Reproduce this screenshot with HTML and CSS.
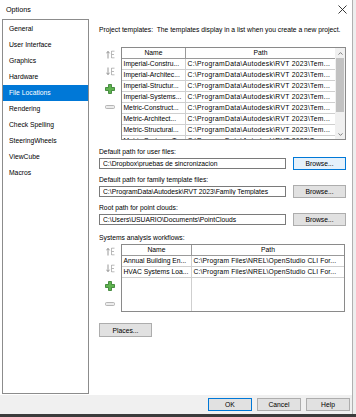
FILE: index.html
```html
<!DOCTYPE html>
<html lang="en">
<head>
    <meta charset="UTF-8">
    <meta name="viewport" content="width=device-width, initial-scale=1.0">
    <title>Options</title>
    <link rel="stylesheet" href="styles.css">
</head>
<body>
    <div class="window">
        <!-- Title bar -->
        <div class="titlebar">
            <span class="title">Options</span>
            <svg class="close" width="9" height="9" viewBox="0 0 9 9"><path d="M0.5 0.5L8.5 8.5M8.5 0.5L0.5 8.5" stroke="#222" stroke-width="0.9"/></svg>
        </div>

        <div class="main">
            <!-- Category list -->
            <ul class="nav">
                <li>General</li>
                <li>User Interface</li>
                <li>Graphics</li>
                <li>Hardware</li>
                <li class="active">File Locations</li>
                <li>Rendering</li>
                <li>Check Spelling</li>
                <li>SteeringWheels</li>
                <li>ViewCube</li>
                <li>Macros</li>
            </ul>

            <div class="panel">
                <p class="label first">Project templates:&nbsp; The templates display in a list when you create a new project.</p>

                <!-- Project templates -->
                <div class="list-block">
                    <div class="tools">
                        <span class="tool"><svg width="9" height="9" viewBox="0 0 9 9"><path d="M2 8.5V1.5M0.4 3.3L2 1.4L3.6 3.3" stroke="#8c8c8c" stroke-width="0.9" fill="none"/><path d="M5.5 1V8M5.5 1.2H8.5M5.5 4.5H8M5.5 7.8H8.5" stroke="#a8a8a8" stroke-width="0.8" fill="none"/></svg></span>
                        <span class="tool"><svg width="9" height="9" viewBox="0 0 9 9"><path d="M2 0.5V7.5M0.4 5.7L2 7.6L3.6 5.7" stroke="#8c8c8c" stroke-width="0.9" fill="none"/><path d="M5.5 1V8M5.5 1.2H8.5M5.5 4.5H8M5.5 7.8H8.5" stroke="#a8a8a8" stroke-width="0.8" fill="none"/></svg></span>
                        <span class="tool"><svg width="10" height="10" viewBox="0 0 10 10"><path d="M3.5 0.5H6.5V3.5H9.5V6.5H6.5V9.5H3.5V6.5H0.5V3.5H3.5Z" fill="#5fb34f" stroke="#2f7a2a" stroke-width="0.8"/></svg></span>
                        <span class="tool"><svg width="10" height="4" viewBox="0 0 10 4"><rect x="0.5" y="0.5" width="9" height="3" rx="1" fill="#ececec" stroke="#a6a6a6" stroke-width="0.8"/></svg></span>
                    </div>
                    <div class="grid templates">
                        <table>
                            <colgroup><col class="col-name"><col></colgroup>
                            <thead>
                                <tr><th>Name</th><th>Path</th></tr>
                            </thead>
                            <tbody>
                                <tr><td>Imperial-Constru...</td><td class="path">C:\ProgramData\Autodesk\RVT 2023\Tem...</td></tr>
                                <tr><td>Imperial-Architec...</td><td class="path">C:\ProgramData\Autodesk\RVT 2023\Tem...</td></tr>
                                <tr><td>Imperial-Structur...</td><td class="path">C:\ProgramData\Autodesk\RVT 2023\Tem...</td></tr>
                                <tr><td>Imperial-Systems...</td><td class="path">C:\ProgramData\Autodesk\RVT 2023\Tem...</td></tr>
                                <tr><td>Metric-Construct...</td><td class="path">C:\ProgramData\Autodesk\RVT 2023\Tem...</td></tr>
                                <tr><td>Metric-Architect...</td><td class="path">C:\ProgramData\Autodesk\RVT 2023\Tem...</td></tr>
                                <tr><td>Metric-Structural...</td><td class="path">C:\ProgramData\Autodesk\RVT 2023\Tem...</td></tr>
                                <tr><td>Metric-Systems-Te...</td><td class="path">C:\ProgramData\Autodesk\RVT 2023\Tem...</td></tr>
                            </tbody>
                        </table>
                        <div class="scrollbar">
                            <span class="arrow"><svg width="5" height="3" viewBox="0 0 5 3"><path d="M0.5 2.6L2.5 0.6L4.5 2.6" stroke="#606060" stroke-width="0.8" fill="none"/></svg></span>
                            <span class="thumb"></span>
                            <span class="track"></span>
                            <span class="arrow"><svg width="5" height="3" viewBox="0 0 5 3"><path d="M0.5 0.4L2.5 2.4L4.5 0.4" stroke="#606060" stroke-width="0.8" fill="none"/></svg></span>
                        </div>
                    </div>
                </div>

                <!-- Path fields -->
                <p class="label user">Default path for user files:</p>
                <div class="path-row">
                    <input type="text" value="C:\Dropbox\pruebas de sincronizacion" readonly>
                    <button class="hot">Browse...</button>
                </div>

                <p class="label">Default path for family template files:</p>
                <div class="path-row">
                    <input type="text" value="C:\ProgramData\Autodesk\RVT 2023\Family Templates" readonly>
                    <button>Browse...</button>
                </div>

                <p class="label">Root path for point clouds:</p>
                <div class="path-row">
                    <input type="text" value="C:\Users\USUARIO\Documents\PointClouds" readonly>
                    <button>Browse...</button>
                </div>

                <p class="label systems">Systems analysis workflows:</p>

                <!-- Systems analysis workflows -->
                <div class="list-block">
                    <div class="tools">
                        <span class="tool"><svg width="9" height="9" viewBox="0 0 9 9"><path d="M2 8.5V1.5M0.4 3.3L2 1.4L3.6 3.3" stroke="#8c8c8c" stroke-width="0.9" fill="none"/><path d="M5.5 1V8M5.5 1.2H8.5M5.5 4.5H8M5.5 7.8H8.5" stroke="#a8a8a8" stroke-width="0.8" fill="none"/></svg></span>
                        <span class="tool"><svg width="9" height="9" viewBox="0 0 9 9"><path d="M2 0.5V7.5M0.4 5.7L2 7.6L3.6 5.7" stroke="#8c8c8c" stroke-width="0.9" fill="none"/><path d="M5.5 1V8M5.5 1.2H8.5M5.5 4.5H8M5.5 7.8H8.5" stroke="#a8a8a8" stroke-width="0.8" fill="none"/></svg></span>
                        <span class="tool"><svg width="10" height="10" viewBox="0 0 10 10"><path d="M3.5 0.5H6.5V3.5H9.5V6.5H6.5V9.5H3.5V6.5H0.5V3.5H3.5Z" fill="#5fb34f" stroke="#2f7a2a" stroke-width="0.8"/></svg></span>
                        <span class="tool"><svg width="10" height="4" viewBox="0 0 10 4"><rect x="0.5" y="0.5" width="9" height="3" rx="1" fill="#ececec" stroke="#a6a6a6" stroke-width="0.8"/></svg></span>
                    </div>
                    <div class="grid workflows">
                        <table>
                            <colgroup><col class="col-name"><col></colgroup>
                            <thead>
                                <tr><th>Name</th><th>Path</th></tr>
                            </thead>
                            <tbody>
                                <tr><td>Annual Building En...</td><td class="path">C:\Program Files\NREL\OpenStudio CLI For...</td></tr>
                                <tr><td>HVAC Systems Loa...</td><td class="path">C:\Program Files\NREL\OpenStudio CLI For...</td></tr>
                                <tr class="filler"><td></td><td></td></tr>
                            </tbody>
                        </table>
                    </div>
                </div>

                <button class="places">Places...</button>
            </div>
        </div>

        <!-- Dialog buttons -->
        <div class="footer">
            <button class="default">OK</button>
            <button>Cancel</button>
            <button>Help</button>
        </div>
    </div>
    <div class="taskbar"></div>
</body>
</html>
```

FILE: styles.css
```css
body {
    margin: 0;
    width: 356px;
    height: 417px;
    overflow: hidden;
    background-color: #eeeeee;
    font-family: "Liberation Sans", Arial, sans-serif;
    font-size: 6.75px;
    color: #000;
}
.window {
    width: 352px;
    height: 414px;
    background-color: #fff;
    border-right: 1px solid #b0b0b0;
    display: flex;
    flex-direction: column;
}
.titlebar {
    height: 19px;
    flex: none;
    display: flex;
    align-items: center;
    justify-content: space-between;
    padding: 0 5px 0 6px;
    font-size: 7.2px;
}
.close {
    display: block;
}
.main {
    flex: 1;
    display: flex;
    min-height: 0;
}
.nav {
    list-style: none;
    margin: 0 0 1px 2px;
    padding: 1px 0 0;
    width: 85px;
    border: 1px solid #8c8c8c;
}
.nav li {
    height: 16px;
    line-height: 16px;
    padding-left: 6px;
}
.nav li.active {
    background-color: #0078d7;
    color: #fff;
}
.panel {
    flex: 1;
    padding: 0 6px 0 10px;
    display: flex;
    flex-direction: column;
    align-items: flex-start;
}
.label {
    margin: 5px 0 0;
    line-height: 9px;
}
.label.first {
    margin-top: 6px;
}
.label.user {
    margin-top: 6.5px;
}
.label.systems {
    margin-top: 7px;
}
.list-block {
    display: flex;
    margin-top: 13px;
}
.label.systems + .list-block {
    margin-top: 2.5px;
}
.tools {
    width: 22px;
    display: flex;
    flex-direction: column;
    align-items: center;
    gap: 8.5px;
    padding-top: 2.5px;
}
.tool {
    height: 9px;
    display: flex;
    align-items: center;
    justify-content: center;
}
.tool svg {
    display: block;
}
.grid {
    display: flex;
    border: 1px solid #8a8a8a;
    overflow: hidden;
}
.grid.templates {
    width: 223px;
    height: 91px;
}
.grid.workflows {
    width: 222px;
    height: 66px;
}
.grid table {
    border-collapse: separate;
    border-spacing: 0;
    table-layout: fixed;
    align-self: flex-start;
}
.templates table {
    width: 213px;
}
.templates .col-name {
    width: 64px;
}
.workflows table {
    width: 222px;
    height: 66px;
}
.workflows .col-name {
    width: 70px;
}
.grid th,
.grid td {
    height: 10px;
    line-height: 10px;
    padding: 0 1.5px;
    white-space: nowrap;
    overflow: hidden;
    text-align: left;
    font-weight: normal;
    border-bottom: 1px solid #cfcfcf;
    border-right: 1px solid #cfcfcf;
}
.grid th {
    text-align: center;
    border-bottom-color: #9a9a9a;
    border-right-color: #9a9a9a;
}
.grid th:last-child,
.grid td:last-child {
    border-right: none;
}
.templates td.path {
    letter-spacing: 0.3px;
}
.workflows td.path {
    letter-spacing: 0.12px;
}
.grid .filler td {
    height: auto;
    border-bottom: none;
}
.scrollbar {
    width: 10px;
    flex: none;
    background-color: #f0f0f0;
    display: flex;
    flex-direction: column;
    align-items: center;
}
.scrollbar .arrow {
    height: 10px;
    display: flex;
    align-items: center;
}
.scrollbar .thumb {
    width: 8px;
    height: 54px;
    background-color: #c2c2c2;
}
.scrollbar .track {
    flex: 1;
}
.path-row {
    display: flex;
    align-items: center;
    gap: 7px;
    margin-top: 1px;
}
.path-row input {
    width: 187px;
    height: 11px;
    box-sizing: border-box;
    margin: 0;
    padding: 0 3px;
    border: 1px solid #7a7a7a;
    font: inherit;
    color: #000;
    outline: none;
}
button {
    width: 53px;
    height: 13px;
    margin: 0;
    padding: 0;
    font: inherit;
    color: #000;
    background-color: #e1e1e1;
    border: 1px solid #adadad;
    border-radius: 0;
}
button.hot {
    background-color: #e5f1fb;
    border-color: #0078d7;
}
.places {
    margin-top: 11px;
    height: 14px;
}
.footer {
    height: 19px;
    flex: none;
    background-color: #f0f0f0;
    display: flex;
    align-items: center;
    justify-content: flex-end;
    gap: 5px;
    padding-right: 2px;
}
.footer button {
    width: 44px;
}
.footer button.default {
    border-color: #0078d7;
}
.taskbar {
    height: 3px;
    background-color: #3b3b3b;
}
```
